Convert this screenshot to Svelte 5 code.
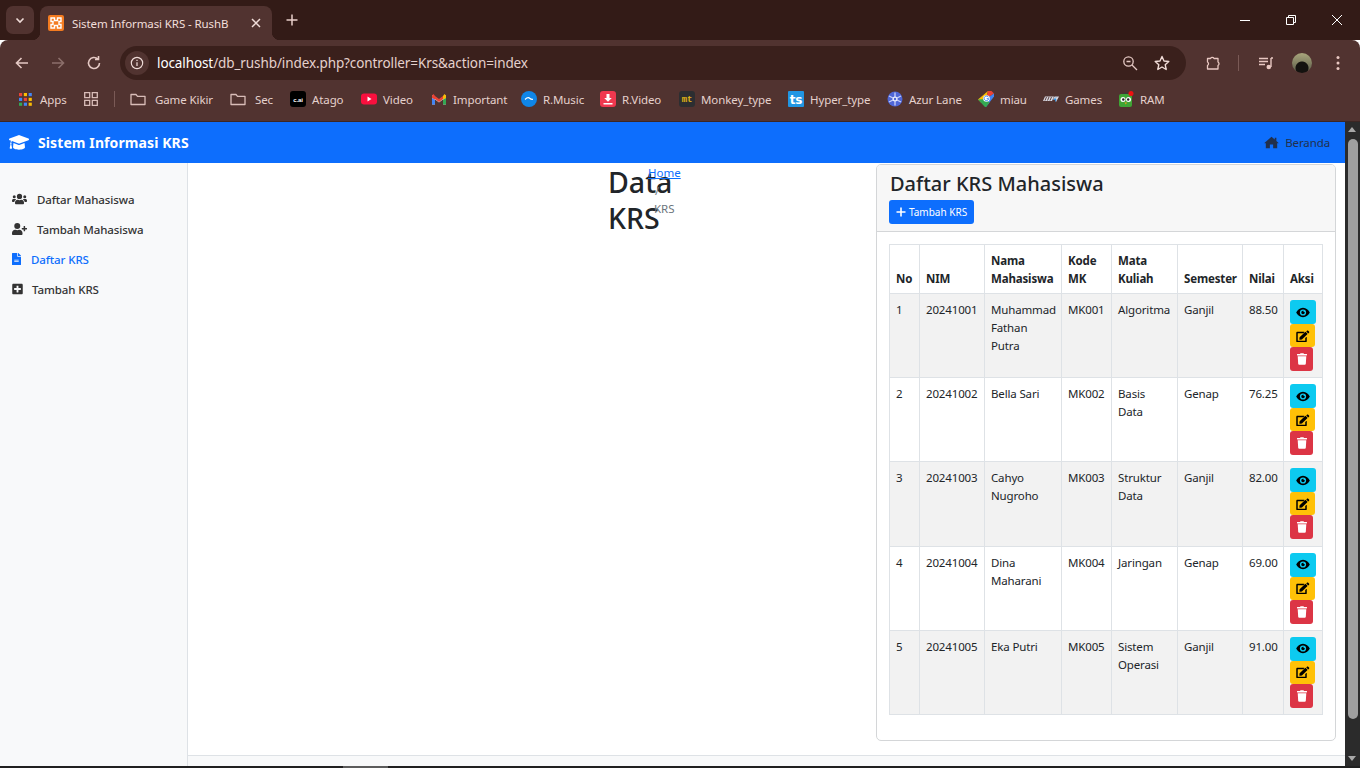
<script>
	const bookmarks = [
		{ label: "Game Kikir", icon: "folder", width: 58 },
		{ label: "Sec", icon: "folder", width: 18 },
		{ label: "Atago", icon: "cai", width: 32 },
		{ label: "Video", icon: "youtube", width: 31 },
		{ label: "Important", icon: "gmail", width: 51 },
		{ label: "R.Music", icon: "music", width: 40 },
		{ label: "R.Video", icon: "rvideo", width: 40 },
		{ label: "Monkey_type", icon: "mt", width: 70 },
		{ label: "Hyper_type", icon: "ts", width: 60 },
		{ label: "Azur Lane", icon: "azur", width: 52 },
		{ label: "miau", icon: "tag", width: 26 },
		{ label: "Games", icon: "games", width: 36 },
		{ label: "RAM", icon: "owl", width: 26 }
	];

	const rows = [
		{ no: 1, nim: "20241001", nama: "Muhammad Fathan Putra", kode: "MK001", mk: "Algoritma", sem: "Ganjil", nilai: "88.50" },
		{ no: 2, nim: "20241002", nama: "Bella Sari", kode: "MK002", mk: "Basis Data", sem: "Genap", nilai: "76.25" },
		{ no: 3, nim: "20241003", nama: "Cahyo Nugroho", kode: "MK003", mk: "Struktur Data", sem: "Ganjil", nilai: "82.00" },
		{ no: 4, nim: "20241004", nama: "Dina Maharani", kode: "MK004", mk: "Jaringan", sem: "Genap", nilai: "69.00" },
		{ no: 5, nim: "20241005", nama: "Eka Putri", kode: "MK005", mk: "Sistem Operasi", sem: "Ganjil", nilai: "91.00" }
	];
</script>

{#snippet bookmarkIcon(name)}
	<svg class="bm-icon" viewBox="0 0 16 16">
		{#if name === "folder"}
			<path d="M1 3.500h5l1.500 1.800H15v8.200H1z" fill="none" stroke="#d9bdb8" stroke-width="1.300" stroke-linejoin="round" />
		{:else if name === "cai"}
			<rect width="16" height="16" rx="3" fill="#000" />
			<text x="8" y="10.500" class="bm-tiny" fill="#fff">c.ai</text>
		{:else if name === "youtube"}
			<rect y="2.500" width="16" height="11" rx="3" fill="#f9103e" />
			<path d="M6.500 5.500l4 2.500-4 2.500z" fill="#fff" />
		{:else if name === "gmail"}
			<path d="M1 13.500V4l7 5 7-5v9.500h-3V8.500L8 11.500 4 8.500v5z" fill="#d9d9d9" />
			<path d="M1 4.500V7l3 1.800V5L2.500 3z" fill="#ea4335" />
			<path d="M15 4.500V7l-3 1.800V5l1.500-2z" fill="#fbbc04" />
			<path d="M4 5l4 3 4-3v3L8 11 4 8z" fill="#ea4335" />
			<path d="M1 7l3 1.800v4.700H1z" fill="#4285f4" />
			<path d="M15 7l-3 1.800v4.700h3z" fill="#34a853" />
		{:else if name === "music"}
			<circle cx="8" cy="8" r="8" fill="#0f86e8" />
			<path d="M4 8.500q3-3 5-1 1 1 3 .8" fill="none" stroke="#fff" stroke-width="1.100" />
		{:else if name === "rvideo"}
			<rect width="16" height="16" rx="3" fill="#f0384f" />
			<path d="M6.500 3h3v4h2.300L8 10.700 4.200 7h2.300zM3.500 12h9v1.500h-9z" fill="#fff" />
		{:else if name === "mt"}
			<rect width="16" height="16" rx="3" fill="#2c2e31" />
			<text x="8" y="11" class="bm-mt" fill="#e2b714">mt</text>
		{:else if name === "ts"}
			<rect width="16" height="16" rx="1" fill="#2196e3" />
			<text x="8" y="13" class="bm-ts" fill="#fff">ts</text>
		{:else if name === "azur"}
			<circle cx="8" cy="8" r="7.500" fill="#4f66d6" />
			<path d="M8 1.500v13M2 5l12 6M14 5L2 11" stroke="#c9d2f7" stroke-width="1.300" />
			<circle cx="8" cy="8" r="2.500" fill="#e8ecfc" />
			<circle cx="8" cy="8" r="1.200" fill="#4f66d6" />
		{:else if name === "tag"}
			<path d="M10 0L0 8.500 3 11.500 8 8z" fill="#fbbc04" />
			<path d="M10 0h3.500L16 2.500 8 8z" fill="#ea4335" />
			<path d="M16 2.500L16 5.500 8 16 8 8z" fill="#4285f4" />
			<path d="M0 8.500L7 16h1l3.500-4.600L8 8z" fill="#34a853" />
			<circle cx="8.500" cy="7.500" r="3.300" fill="#fff" />
			<path d="M10.500 6.300a2.300 2.300 0 1 0 .2 1.400H8.700" fill="none" stroke="#4285f4" stroke-width="1" />
		{:else if name === "games"}
			<path d="M2 5.500h9l-2 4.500H0zM11.500 5.500H16l-3 5.500-.5-2.500H10z" fill="#d7d7e0" />
			<path d="M3.500 6l-1.500 3.500M6 6L4.500 9.500M8.500 6L7 9.500" stroke="#513330" stroke-width=".9" />
			<path d="M13 6.500l-2 2h2l-.5 2" fill="none" stroke="#2f8fe0" stroke-width="1" />
		{:else if name === "owl"}
			<rect x="1" y="3" width="13" height="13" rx="2" fill="#3fa535" />
			<path d="M4 3q4-3 7 0z" fill="#3a3a3a" />
			<circle cx="5" cy="8.500" r="2.500" fill="#fff" />
			<circle cx="10.500" cy="8.500" r="2.500" fill="#fff" />
			<circle cx="5.300" cy="8.500" r="1.200" fill="#222" />
			<circle cx="10.200" cy="8.500" r="1.200" fill="#222" />
			<path d="M6.500 11.500h2.500L7.800 13.500z" fill="#f2a21b" />
			<circle cx="13" cy="2.500" r="2.500" fill="#ee1111" />
		{/if}
	</svg>
{/snippet}

{#snippet eyeIcon()}
	<svg class="act-icon eye" viewBox="0 0 576 512">
		<path d="M288 64C160 64 56 160 8 256c48 96 152 192 280 192s232-96 280-192C520 160 416 64 288 64zm0 320a128 128 0 1 1 0-256 128 128 0 0 1 0 256zm0-200a72 72 0 1 0 72 72c0-8-1-14-3-21a36 36 0 0 1-48-48c-7-2-14-3-21-3z" />
	</svg>
{/snippet}

{#snippet editIcon()}
	<svg class="act-icon edit" viewBox="0 0 576 512">
		<path d="M402 84l70 70a16 16 0 0 1 0 22L242 406l-82 9a24 24 0 0 1-26-26l9-82L380 84a16 16 0 0 1 22 0zM544 66l-34-34c-14-14-38-14-52 0l-32 32 86 86 32-32c14-14 14-38 0-52zM384 346v114H64V140h230c4 0 6-1 8-3l40-40c7-8 2-21-8-21H48C22 76 0 97 0 124v352c0 26 22 48 48 48h352c26 0 48-22 48-48V306c0-11-13-16-21-9l-40 40c-2 2-3 5-3 9z" />
	</svg>
{/snippet}

{#snippet trashIcon()}
	<svg class="act-icon trash" viewBox="0 0 448 512">
		<path d="M432 32H312l-9-19A24 24 0 0 0 281 0H167a24 24 0 0 0-22 13l-9 19H16A16 16 0 0 0 0 48v32a16 16 0 0 0 16 16h416a16 16 0 0 0 16-16V48a16 16 0 0 0-16-16zM53 467a48 48 0 0 0 48 45h246a48 48 0 0 0 48-45l21-339H32z" />
	</svg>
{/snippet}

<div class="window">
	<div class="tabstrip">
		<button class="tab-menu" type="button" aria-label="Tab search">
			<svg viewBox="0 0 12 12" width="12" height="12"><path d="M2.500 4.500L6 8l3.500-3.500" fill="none" stroke="#f0dcd8" stroke-width="1.600" /></svg>
		</button>
		<div class="tab">
			<svg class="favicon" viewBox="0 0 16 16">
				<rect width="16" height="16" rx="2" fill="#f47b20" />
				<path d="M3 3h3.500v2.500h3V3H13v3.500h-2v3h2V13H9.500v-2.500h-3V13H3V9.500h2v-3H3z" fill="none" stroke="#fff" stroke-width="1.400" />
			</svg>
			<span class="tab-title">Sistem Informasi KRS - RushB</span>
			<svg class="tab-close" viewBox="0 0 10 10" width="10" height="10"><path d="M1 1l8 8M9 1L1 9" stroke="#f0dcd8" stroke-width="1.500" /></svg>
		</div>
		<svg class="new-tab" viewBox="0 0 12 12" width="12" height="12"><path d="M6 .5v11M.5 6h11" stroke="#e9cfca" stroke-width="1.500" /></svg>
		<div class="win-controls">
			<svg viewBox="0 0 12 12" width="12" height="12"><path d="M1 6.500h10" stroke="#fff" stroke-width="1" /></svg>
			<svg viewBox="0 0 12 12" width="12" height="12"><path d="M1.500 3.500h7v7h-7zM3.500 3.500v-2h7v7h-2" fill="none" stroke="#fff" stroke-width="1" /></svg>
			<svg viewBox="0 0 12 12" width="12" height="12"><path d="M1 1l10 10M11 1L1 11" stroke="#fff" stroke-width="1" /></svg>
		</div>
	</div>

	<div class="toolbar">
		<svg class="nav-icon" viewBox="0 0 16 16"><path d="M14 8H3M7.500 3L2.500 8l5 5" fill="none" stroke="#e5c9c4" stroke-width="1.600" /></svg>
		<svg class="nav-icon" viewBox="0 0 16 16"><path d="M2 8h11M8.500 3l5 5-5 5" fill="none" stroke="#8c6f6b" stroke-width="1.600" /></svg>
		<svg class="nav-icon" viewBox="0 0 16 16"><path d="M13.500 8a5.500 5.500 0 1 1-1.700-4M12.500 1v3.500H9" fill="none" stroke="#e5c9c4" stroke-width="1.600" /></svg>
		<div class="omnibox">
			<span class="site-info">
				<svg viewBox="0 0 16 16" width="14" height="14"><circle cx="8" cy="8" r="6.500" fill="none" stroke="#f0dcd8" stroke-width="1.300" /><path d="M8 7v4.500M8 4.300v1.400" stroke="#f0dcd8" stroke-width="1.400" /></svg>
			</span>
			<span class="url"><span class="host">localhost</span>/db_rushb/index.php?controller=Krs&amp;action=index</span>
			<svg class="omni-zoom" viewBox="0 0 16 16" width="16" height="16"><circle cx="6.500" cy="6.500" r="4.700" fill="none" stroke="#e5c9c4" stroke-width="1.300" /><path d="M10 10l5 5M4.500 6.500h4" stroke="#e5c9c4" stroke-width="1.300" /></svg>
			<svg viewBox="0 0 16 16" width="16" height="16"><path d="M8 1.500l2 4.500 4.800.5-3.600 3.200 1 4.800L8 12l-4.200 2.500 1-4.800L1.200 6.500 6 6z" fill="none" stroke="#f0dcd8" stroke-width="1.400" stroke-linejoin="round" /></svg>
		</div>
		<svg class="ext-icon" viewBox="0 0 16 16" width="16" height="16"><path d="M2.500 3.500h3a2 2 0 0 1 3.500 0h4v3.500a2 2 0 0 1 0 3.500v3.500H2.500V10.500a2 2 0 0 0 0-3.500z" fill="none" stroke="#e9c8c2" stroke-width="1.300" stroke-linejoin="round" /></svg>
		<span class="tool-sep"></span>
		<svg class="media-icon" viewBox="0 0 16 16" width="16" height="16"><path d="M1 3.500h9M1 6.500h9M1 9.500h6" stroke="#e9c8c2" stroke-width="1.300" /><path d="M13 3v9" stroke="#e9c8c2" stroke-width="1.400" /><path d="M13 3h2" stroke="#e9c8c2" stroke-width="1.400" /><circle cx="10.800" cy="12" r="2.300" fill="#e9c8c2" /></svg>
		<span class="avatar"></span>
		<svg class="dots" viewBox="0 0 4 16" width="4" height="16"><circle cx="2" cy="2.500" r="1.500" fill="#e9c8c2" /><circle cx="2" cy="8" r="1.500" fill="#e9c8c2" /><circle cx="2" cy="13.500" r="1.500" fill="#e9c8c2" /></svg>
	</div>

	<div class="bookmarks">
		<span class="bm apps">
			<svg class="bm-icon grid-colors" viewBox="0 0 14 14">
				<g fill="#ea4335"><rect width="3.400" height="3.400" /><rect x="5.200" width="3.400" height="3.400" fill="#fbbc04" /><rect x="10.400" width="3.400" height="3.400" fill="#4285f4" /></g>
				<g fill="#34a853"><rect y="5.200" width="3.400" height="3.400" fill="#4285f4" /><rect x="5.200" y="5.200" width="3.400" height="3.400" fill="#ea4335" /><rect x="10.400" y="5.200" width="3.400" height="3.400" fill="#fbbc04" /></g>
				<g fill="#34a853"><rect y="10.400" width="3.400" height="3.400" /><rect x="5.200" y="10.400" width="3.400" height="3.400" fill="#4285f4" /><rect x="10.400" y="10.400" width="3.400" height="3.400" fill="#fbbc04" /></g>
			</svg>
			<span class="bm-text apps-text">Apps</span>
		</span>
		<svg class="tile-icon" viewBox="0 0 14 14" width="14" height="14"><path d="M.7.700h5v5h-5zM8.300.700h5v5h-5zM.7 8.300h5v5h-5zM8.300 8.300h5v5h-5z" fill="none" stroke="#d9bdb8" stroke-width="1.300" /></svg>
		<span class="bm-sep"></span>
		{#each bookmarks as b}
			<span class="bm" class:folder={b.icon === "folder"}>
				{@render bookmarkIcon(b.icon)}
				<span class="bm-text" style="width: {b.width}px">{b.label}</span>
			</span>
		{/each}
	</div>

	<div class="viewport">
		<div class="page">
			<nav class="navbar">
				<a class="brand" href="#top">
					<svg viewBox="0 64 640 396" width="20" height="15" preserveAspectRatio="none"><path fill="#fff" d="M622 157L338 70a60 60 0 0 0-36 0L18 157c-24 7-24 38 0 45l50 15c-11 13-18 30-19 49-7 4-11 11-11 20 0 8 4 15 10 19L22 404c-2 10 5 20 16 20h44c11 0 18-10 16-20L72 305c6-4 10-11 10-19 0-9-5-16-11-20 1-17 10-32 24-41l207 64c10 3 28 7 36 0l284-87c24-7 24-38 0-45zM352 320c-28 9-53 4-64 0l-145-45-14 115c0 35 86 64 191 64s191-29 191-64l-14-115z" /></svg>
					<span>Sistem Informasi KRS</span>
				</a>
				<a class="nav-home" href="#top">
					<svg viewBox="0 0 576 512" width="15" height="13"><path fill="currentColor" d="M288 32L8 272l24 28 32-27v207h160V336h128v144h160V273l32 27 24-28-88-75V64h-64v78z" /></svg>
					<span>Beranda</span>
				</a>
			</nav>

			<div class="body-row">
				<aside class="sidebar">
					<a class="side-link" href="#top">
						<svg class="side-icon" viewBox="0 0 640 512"><path fill="currentColor" d="M96 224a64 64 0 1 0 0-128 64 64 0 0 0 0 128zm448 0a64 64 0 1 0 0-128 64 64 0 0 0 0 128zm32 32h-64c-18 0-34 7-45 19 40 22 69 62 75 109h66c18 0 32-14 32-32v-32c0-35-29-64-64-64zm-256 0a112 112 0 1 0 0-224 112 112 0 0 0 0 224zm77 32h-8c-21 10-44 16-69 16s-48-6-69-16h-8C179 288 128 339 128 403v29c0 26 22 48 48 48h288c26 0 48-22 48-48v-29c0-64-51-115-115-115zM173 275c-11-12-27-19-45-19H64c-35 0-64 29-64 64v32c0 18 14 32 32 32h66c6-47 35-87 75-109z" /></svg>
						<span>Daftar Mahasiswa</span>
					</a>
					<a class="side-link" href="#top">
						<svg class="side-icon" viewBox="0 0 640 512"><path fill="currentColor" d="M624 208h-64v-64c0-9-7-16-16-16h-32c-9 0-16 7-16 16v64h-64c-9 0-16 7-16 16v32c0 9 7 16 16 16h64v64c0 9 7 16 16 16h32c9 0 16-7 16-16v-64h64c9 0 16-7 16-16v-32c0-9-7-16-16-16zM224 256a128 128 0 1 0 0-256 128 128 0 0 0 0 256zm90 32h-17a174 174 0 0 1-146 0h-17C60 288 0 348 0 422v42c0 26 22 48 48 48h352c26 0 48-22 48-48v-42c0-74-60-134-134-134z" /></svg>
						<span>Tambah Mahasiswa</span>
					</a>
					<a class="side-link active" href="#top">
						<svg class="side-icon file" viewBox="0 0 384 512"><path fill="currentColor" d="M224 136V0H24C11 0 0 11 0 24v464c0 13 11 24 24 24h336c13 0 24-11 24-24V160H248c-13 0-24-11-24-24zm64 236c0 7-5 12-12 12H108c-7 0-12-5-12-12v-8c0-7 5-12 12-12h168c7 0 12 5 12 12zm0-64c0 7-5 12-12 12H108c-7 0-12-5-12-12v-8c0-7 5-12 12-12h168c7 0 12 5 12 12zM384 122v6H256V0h6c6 0 12 3 17 7l98 98c4 5 7 11 7 17z" /></svg>
						<span>Daftar KRS</span>
					</a>
					<a class="side-link" href="#top">
						<svg class="side-icon square" viewBox="0 0 448 512"><path fill="currentColor" d="M400 32H48C22 32 0 54 0 80v352c0 26 22 48 48 48h352c26 0 48-22 48-48V80c0-26-22-48-48-48zm-32 252c0 7-5 12-12 12h-92v92c0 7-5 12-12 12h-56c-7 0-12-5-12-12v-92H92c-7 0-12-5-12-12v-56c0-7 5-12 12-12h92v-92c0-7 5-12 12-12h56c7 0 12 5 12 12v92h92c7 0 12 5 12 12z" /></svg>
						<span>Tambah KRS</span>
					</a>
				</aside>

				<div class="main">
					<main class="content">
						<div class="page-head">
							<h1>Data KRS</h1>
							<div class="crumbs">
								<a href="#top">Home</a>
								<span class="crumb-sep">/</span>
								<span class="crumb-now">KRS</span>
							</div>
						</div>

						<section class="card">
							<header class="card-head">
								<h2>Daftar KRS Mahasiswa</h2>
								<button class="btn-add" type="button">
									<svg viewBox="0 0 10 10" width="10" height="10"><path d="M5 .5v9M.5 5h9" stroke="#fff" stroke-width="1.600" /></svg>
									Tambah KRS
								</button>
							</header>
							<div class="card-body">
								<table>
									<colgroup>
										<col class="c-no" /><col class="c-nim" /><col class="c-nama" /><col class="c-kode" />
										<col class="c-mk" /><col class="c-sem" /><col class="c-nilai" /><col class="c-aksi" />
									</colgroup>
									<thead>
										<tr>
											<th>No</th><th>NIM</th><th>Nama Mahasiswa</th><th>Kode MK</th>
											<th>Mata Kuliah</th><th>Semester</th><th>Nilai</th><th>Aksi</th>
										</tr>
									</thead>
									<tbody>
										{#each rows as r}
											<tr>
												<td>{r.no}</td><td>{r.nim}</td><td>{r.nama}</td><td>{r.kode}</td>
												<td>{r.mk}</td><td>{r.sem}</td><td>{r.nilai}</td>
												<td class="actions">
													<button class="act info" type="button" aria-label="Lihat">{@render eyeIcon()}</button>
													<button class="act warn" type="button" aria-label="Ubah">{@render editIcon()}</button>
													<button class="act danger" type="button" aria-label="Hapus">{@render trashIcon()}</button>
												</td>
											</tr>
										{/each}
									</tbody>
								</table>
							</div>
						</section>
					</main>
					<footer class="page-foot"></footer>
				</div>
			</div>
		</div>

		<div class="vscroll">
			<span class="arrow up"></span>
			<span class="thumb"></span>
			<span class="arrow down"></span>
		</div>
	</div>
	<div class="hscroll"><span class="hthumb"></span></div>
</div>

<style>
:global(body) {
	margin: 0;
	overflow: hidden;
	font-family: "Noto Sans", "Open Sans", sans-serif;
}
a {
	text-decoration: none;
	color: inherit;
}
button {
	font-family: inherit;
	border: none;
	padding: 0;
}
.window {
	width: 1360px;
	height: 768px;
	display: flex;
	flex-direction: column;
	overflow: hidden;
	background: #fff;
}

/* browser chrome */
.tabstrip {
	height: 40px;
	flex: none;
	background: #331b17;
	display: flex;
	align-items: flex-end;
	padding-left: 6px;
	box-sizing: border-box;
}
.tab-menu {
	width: 28px;
	height: 28px;
	margin-bottom: 6px;
	border-radius: 7px;
	background: #513330;
	display: flex;
	align-items: center;
	justify-content: center;
}
.tab {
	position: relative;
	margin-left: 6px;
	width: 232px;
	height: 34px;
	background: #513330;
	border-radius: 8px 8px 0 0;
	display: flex;
	align-items: center;
	box-sizing: border-box;
	padding: 0 11px 0 8px;
	color: #f2dfdb;
	font-size: 11.500px;
	letter-spacing: -0.1px;
}
.tab::before,
.tab::after {
	content: "";
	position: absolute;
	bottom: 0;
	width: 8px;
	height: 8px;
}
.tab::before {
	left: -8px;
	background: radial-gradient(circle at 0 0, transparent 8px, #513330 8.500px);
}
.tab::after {
	right: -8px;
	background: radial-gradient(circle at 100% 0, transparent 8px, #513330 8.500px);
}
.favicon {
	width: 16px;
	height: 16px;
	flex: none;
}
.tab-title {
	margin-left: 8px;
	flex: 1;
	white-space: nowrap;
	overflow: hidden;
}
.new-tab {
	margin: 0 0 14px 14px;
}
.win-controls {
	margin-left: auto;
	align-self: flex-start;
	display: flex;
	gap: 34px;
	padding: 14px 17px 0 0;
}
.toolbar {
	height: 46px;
	flex: none;
	background: #513330;
	display: flex;
	align-items: center;
	padding-left: 14px;
	box-sizing: border-box;
	border-radius: 8px 8px 0 0;
}
.nav-icon {
	width: 16px;
	height: 16px;
	margin-right: 20px;
}
.nav-icon:nth-child(3) {
	margin-right: 18px;
}
.omnibox {
	width: 1066px;
	height: 34px;
	background: #3a201c;
	border-radius: 17px;
	display: flex;
	align-items: center;
	box-sizing: border-box;
	padding: 0 16px 0 5px;
	color: #e5d1cd;
	font-size: 13.500px;
}
.site-info {
	width: 24px;
	height: 24px;
	border-radius: 50%;
	background: #513330;
	display: flex;
	align-items: center;
	justify-content: center;
}
.url {
	margin-left: 8px;
	flex: 1;
	white-space: nowrap;
	letter-spacing: -0.1px;
}
.host {
	color: #fff;
}
.omni-zoom {
	margin-right: 16px;
}
.ext-icon {
	margin-left: 19px;
}
.tool-sep {
	width: 1px;
	height: 16px;
	background: #7a5a56;
	margin: 0 19px 0 17px;
}
.avatar {
	width: 20px;
	height: 20px;
	border-radius: 50%;
	margin-left: 18px;
	background: radial-gradient(circle at 50% 75%, #14120f 0 6px, transparent 7px), linear-gradient(#a9a67c, #5a5a48);
}
.dots {
	margin-left: 24px;
}
.bookmarks {
	height: 36px;
	flex: none;
	background: #513330;
	border-bottom: 1px solid #3c2623;
	box-sizing: border-box;
	display: flex;
	align-items: center;
	padding: 0 0 9px 19px;
	gap: 17px;
	color: #e5d1cd;
	font-size: 11.500px;
	letter-spacing: -0.1px;
}
.bm {
	display: flex;
	align-items: center;
	gap: 6px;
}
.bm.folder {
	gap: 9px;
}
.bm-text {
	white-space: nowrap;
}
.apps {
	gap: 8px;
}
.apps-text {
	width: 27px;
}
.bm-icon {
	width: 16px;
	height: 16px;
	flex: none;
}
.grid-colors {
	width: 13px;
	height: 13px;
}
.tile-icon {
	margin-right: -1px;
}
.bm-tiny {
	font-size: 6px;
	font-weight: 700;
	text-anchor: middle;
	font-family: "Liberation Sans", sans-serif;
}
.bm-mt {
	font-size: 9px;
	font-weight: 700;
	text-anchor: middle;
	font-family: "Liberation Mono", monospace;
}
.bm-ts {
	font-size: 12px;
	font-weight: 700;
	text-anchor: middle;
	font-family: "DejaVu Sans", sans-serif;
}
.bm-sep {
	width: 1px;
	height: 16px;
	margin-right: -2px;
	background: #7a5a56;
}

/* page */
.viewport {
	flex: 1;
	min-height: 0;
	display: flex;
}
.page {
	flex: 1;
	min-width: 0;
	display: flex;
	flex-direction: column;
}
.navbar {
	height: 41px;
	flex: none;
	background: #0d6efd;
	display: flex;
	align-items: center;
	justify-content: space-between;
	padding: 0 15px 0 9px;
}
.brand {
	display: flex;
	align-items: center;
	gap: 9px;
	color: #fff;
	font-size: 14px;
	font-weight: 700;
	letter-spacing: 0.1px;
}
.nav-home {
	display: flex;
	align-items: center;
	gap: 6px;
	color: #21304d;
	font-size: 11.500px;
	letter-spacing: -0.1px;
}
.body-row {
	flex: 1;
	min-height: 0;
	display: flex;
}
.sidebar {
	width: 188px;
	flex: none;
	box-sizing: border-box;
	background: #f8f9fa;
	border-right: 1px solid #dee2e6;
	padding: 21px 12px 0;
	display: flex;
	flex-direction: column;
}
.side-link {
	height: 30px;
	display: flex;
	align-items: center;
	gap: 10px;
	color: #333;
	font-size: 11.500px;
	font-weight: 500;
	letter-spacing: -0.1px;
}
.side-link.active {
	color: #0d6efd;
}
.side-icon {
	width: 15px;
	height: 12px;
	flex: none;
}
.side-icon.file {
	width: 9px;
}
.side-icon.square {
	width: 11px;
	margin-right: -1px;
}
.main {
	flex: 1;
	min-width: 0;
	display: flex;
	flex-direction: column;
}
.content {
	flex: 1;
	min-height: 0;
	display: flex;
	align-items: flex-start;
	padding: 1px 9px 0 0;
}
.page-head {
	flex: 1;
	position: relative;
	padding-left: 420px;
}
h1 {
	margin: 0;
	padding-top: 1px;
	width: 70px;
	font-size: 28.500px;
	line-height: 35.500px;
	font-weight: 500;
	color: #212529;
}
.crumbs {
	position: absolute;
	left: 460px;
	top: 0;
	display: flex;
	flex-direction: column;
	align-items: flex-start;
	font-size: 11.500px;
	line-height: 18px;
	color: #6c757d;
}
.crumbs a {
	color: #0d6efd;
	text-decoration: underline;
}
.crumb-sep {
	margin-left: 7px;
}
.crumb-now {
	margin-left: 6px;
}
.card {
	width: 460px;
	height: 577px;
	flex: none;
	box-sizing: border-box;
	border: 1px solid #d4d6d8;
	border-radius: 5px;
	background: #fff;
	overflow: hidden;
}
.card-head {
	height: 67px;
	box-sizing: border-box;
	background: #f7f7f7;
	border-bottom: 1px solid #d4d6d8;
	padding: 4px 12px 0;
}
h2 {
	margin: 0 0 1px 1px;
	font-size: 20px;
	line-height: 30px;
	font-weight: 500;
	color: #212529;
}
.btn-add {
	display: inline-flex;
	align-items: center;
	gap: 3px;
	height: 24px;
	padding: 0 6.500px 0 7px;
	border-radius: 3px;
	background: #0d6efd;
	color: #fff;
	font-size: 10px;
}
.card-body {
	padding: 12px 12px 0;
}
table {
	width: 433px;
	table-layout: fixed;
	border-collapse: collapse;
	font-size: 11.500px;
	letter-spacing: -0.15px;
	line-height: 18px;
	color: #212529;
}
.c-no { width: 30px; }
.c-nim { width: 65px; }
.c-nama { width: 77px; }
.c-kode { width: 50px; }
.c-mk { width: 66px; }
.c-sem { width: 65px; }
.c-nilai { width: 41px; }
.c-aksi { width: 39px; }
th,
td {
	border: 1px solid #dee2e6;
	padding: 7px 6px 6px;
	text-align: left;
	overflow: visible;
}
th {
	height: 37px;
	padding: 6px 6px 5px;
	vertical-align: bottom;
	font-weight: 700;
}
td {
	vertical-align: top;
	height: 70.200px;
}
tbody tr:nth-child(odd) td {
	background: #f2f2f2;
}
td.actions {
	padding-top: 6px;
	padding-bottom: 0;
}
.act {
	display: flex;
	align-items: center;
	justify-content: center;
	height: 24px;
	border-radius: 3px;
	color: #000;
}
.act.info {
	width: 26px;
	background: #0dcaf0;
}
.act.warn {
	width: 25px;
	background: #ffc107;
	height: 23px;
}
.act.danger {
	width: 23px;
	background: #dc3545;
	color: #fff;
}
.act-icon {
	height: 12px;
	fill: currentColor;
}
.eye {
	width: 14px;
	height: 13px;
}
.edit {
	width: 14px;
}
.trash {
	width: 10px;
}
.page-foot {
	height: 11px;
	flex: none;
	box-sizing: border-box;
	background: #f8f9fa;
	border-top: 1px solid #dee2e6;
}

/* fake scrollbars */
.vscroll {
	width: 15px;
	flex: none;
	background: #2b2b2b;
	position: relative;
}
.thumb {
	position: absolute;
	left: 3px;
	right: 2px;
	top: 17px;
	height: 580px;
	border-radius: 5px;
	background: #9f9f9f;
}
.arrow {
	position: absolute;
	left: 3px;
	width: 0;
	height: 0;
	border-left: 4.500px solid transparent;
	border-right: 4.500px solid transparent;
}
.arrow.up {
	top: 5px;
	border-bottom: 5px solid #a8a8a8;
}
.arrow.down {
	bottom: 5px;
	border-top: 5px solid #a8a8a8;
}
.hscroll {
	height: 2px;
	flex: none;
	background: #202020;
	position: relative;
}
.hthumb {
	position: absolute;
	left: 343px;
	top: 0;
	width: 45px;
	height: 2px;
	background: #5c5c5c;
}
</style>
